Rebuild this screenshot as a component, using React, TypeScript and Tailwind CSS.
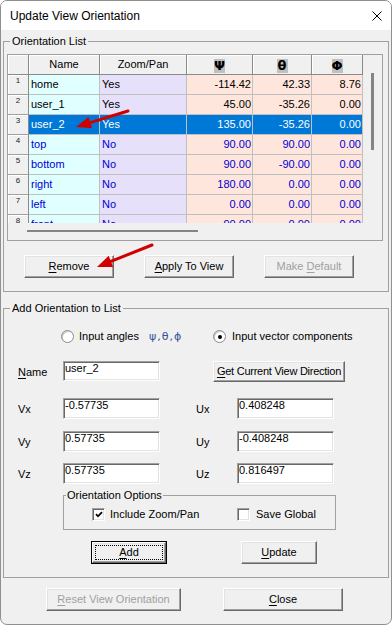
import React from 'react';

type Row = {
  n: number;
  name: string;
  zoom: string;
  psi: string;
  th: string;
  ph: string;
  user?: boolean;
  sel?: boolean;
};

const rows: Row[] = [
  { n: 1, name: 'home', zoom: 'Yes', psi: '-114.42', th: '42.33', ph: '8.76', user: true },
  { n: 2, name: 'user_1', zoom: 'Yes', psi: '45.00', th: '-35.26', ph: '0.00', user: true },
  { n: 3, name: 'user_2', zoom: 'Yes', psi: '135.00', th: '-35.26', ph: '0.00', user: true, sel: true },
  { n: 4, name: 'top', zoom: 'No', psi: '90.00', th: '90.00', ph: '0.00' },
  { n: 5, name: 'bottom', zoom: 'No', psi: '90.00', th: '-90.00', ph: '0.00' },
  { n: 6, name: 'right', zoom: 'No', psi: '180.00', th: '0.00', ph: '0.00' },
  { n: 7, name: 'left', zoom: 'No', psi: '0.00', th: '0.00', ph: '0.00' },
  { n: 8, name: 'front', zoom: 'No', psi: '90.00', th: '0.00', ph: '0.00' },
];

function U({ c }: { c: string }) {
  return <span className="underline underline-offset-[2px] decoration-1">{c}</span>;
}

const raised =
  'flex items-center justify-center whitespace-nowrap bg-[#f0f0f0] border border-t-white border-l-white border-r-[#696969] border-b-[#696969] shadow-[inset_-1px_-1px_0_#a0a0a0,inset_1px_1px_0_#e3e3e3]';

function Btn({
  className,
  children,
  disabled,
  def,
}: {
  className: string;
  children: React.ReactNode;
  disabled?: boolean;
  def?: boolean;
}) {
  if (def) {
    return (
      <div className={`${className} border border-black flex`}>
        <div className={`flex-1 ${raised} p-[2px]`}>
          <div className="w-full h-full border border-dotted border-black flex items-center justify-center">
            {children}
          </div>
        </div>
      </div>
    );
  }
  return (
    <div className={`${className} ${raised} ${disabled ? 'text-[#a0a0a0]' : 'text-black'}`}>{children}</div>
  );
}

function Input({ className, value }: { className: string; value: string }) {
  return (
    <div
      className={`${className} bg-white border border-t-[#a0a0a0] border-l-[#a0a0a0] border-r-white border-b-white shadow-[inset_1px_1px_0_#696969,inset_-1px_-1px_0_#e3e3e3] pl-[1px] flex items-start`}
    >
      {value}
    </div>
  );
}

function Radio({ checked }: { checked?: boolean }) {
  return (
    <span className="w-[13px] h-[13px] shrink-0 rounded-full bg-white border border-[#8a8a8a] shadow-[inset_1px_1px_0_#c8c8c8] flex items-center justify-center">
      {checked && <span className="w-[4px] h-[4px] rounded-full bg-black" />}
    </span>
  );
}

function Check({ checked }: { checked?: boolean }) {
  return (
    <span className="w-[13px] h-[13px] shrink-0 bg-white border border-t-[#a0a0a0] border-l-[#a0a0a0] border-r-white border-b-white shadow-[inset_1px_1px_0_#696969,inset_-1px_-1px_0_#e3e3e3] flex items-center justify-center">
      {checked && (
        <svg width="8" height="7" viewBox="0 0 8 7">
          <path d="M1 3.2 L3 5.3 L7 1.2" stroke="#000" strokeWidth="1.8" fill="none" />
        </svg>
      )}
    </span>
  );
}

const hdr =
  'h-full bg-[#f0f0f0] border-r border-b border-r-[#8a8a8a] border-b-[#8a8a8a] shadow-[inset_1px_1px_0_#fff] flex items-center justify-center';

function Greek({ c }: { c: string }) {
  return (
    <span className="inline-flex mt-[3px] w-[11px] h-[14px] bg-[#c0c0c0] items-center justify-center font-bold text-[13px] leading-[14px] font-['DejaVu_Sans',sans-serif]">
      {c}
    </span>
  );
}

function DataRow({ r }: { r: Row }) {
  const tc = r.user ? 'text-black' : 'text-[#0000d8]';
  const c = (bg: string) => (r.sel ? 'bg-[#0078d7] text-white' : `${bg} ${tc}`);
  return (
    <div className="flex h-[20px]">
      <div className="w-[21px] h-full bg-[#f0f0f0] border-r border-b border-r-[#8a8a8a] border-b-[#a0a0a0] shadow-[inset_1px_1px_0_#fff] text-[8px] leading-[8px] text-center pt-[2px] text-[#222]">
        {r.n}
      </div>
      <div className={`w-[71px] h-full border-r border-b border-[#c0c0c0] pl-[2px] flex items-center ${c('bg-[#e0ffff]')}`}>
        {r.name}
      </div>
      <div className={`w-[87px] h-full border-r border-b border-[#c0c0c0] pl-[2px] flex items-center ${c('bg-[#e6e0fa]')}`}>
        {r.zoom}
      </div>
      <div className={`w-[66px] h-full border-r border-b border-[#c0c0c0] pr-[1px] flex items-center justify-end ${c('bg-[#ffe6dc]')}`}>
        {r.psi}
      </div>
      <div className={`w-[59px] h-full border-r border-b border-[#c0c0c0] pr-[1px] flex items-center justify-end ${c('bg-[#ffe6dc]')}`}>
        {r.th}
      </div>
      <div className={`w-[51px] h-full border-r border-b border-[#c0c0c0] pr-[1px] flex items-center justify-end ${c('bg-[#ffe6dc]')}`}>
        {r.ph}
      </div>
    </div>
  );
}

function Table() {
  return (
    <div className="w-[376px] h-[187px] mt-[6px] border border-[#a0a0a0] bg-[#f0f0f0] flex flex-col">
      <div className="flex h-[168px]">
        <div className="w-[355px] h-[168px] overflow-hidden">
          <div className="flex h-[20px]">
            <div className={`w-[21px] ${hdr}`} />
            <div className={`w-[71px] ${hdr}`}>Name</div>
            <div className={`w-[87px] ${hdr}`}>Zoom/Pan</div>
            <div className={`w-[66px] ${hdr}`}>
              <Greek c="Ψ" />
            </div>
            <div className={`w-[59px] ${hdr}`}>
              <Greek c="θ" />
            </div>
            <div className={`w-[51px] ${hdr}`}>
              <Greek c="Φ" />
            </div>
          </div>
          {rows.map((r) => (
            <DataRow key={r.n} r={r} />
          ))}
        </div>
        <div className="w-[19px] h-[168px] pl-[8px] pt-[18px]">
          <div className="w-[3px] h-[77px] bg-[#858585]" />
        </div>
      </div>
      <div className="h-[17px] pl-[19px] pt-[7px]">
        <div className="w-[171px] h-[2px] bg-[#858585]" />
      </div>
    </div>
  );
}

export default function App() {
  return (
    <div className="relative w-[392px] h-[625px] bg-[#f0f0f0] border border-[#8f8f8f] rounded-[7px] overflow-hidden font-['Liberation_Sans',Arial,sans-serif] text-[11px] leading-[13px] text-black">
      {/* title bar */}
      <div className="h-[29px] bg-white flex items-center justify-between pl-[9px] pr-[9px] pt-[1px]">
        <span className="text-[12px] leading-[15px]">Update View Orientation</span>
        <svg width="10" height="10" viewBox="0 0 10 10">
          <path d="M0.5 0.5 L9.5 9.5 M9.5 0.5 L0.5 9.5" stroke="#000" strokeWidth="1" />
        </svg>
      </div>

      {/* Orientation List */}
      <fieldset className="mx-[2px] mt-[5px] border border-[#a0a0a0]">
        <legend className="ml-[6px] px-[2px] leading-[13px]">Orientation List</legend>
        <div className="pl-[3px] pb-[13px]">
          <Table />
          <div className="flex mt-[14px] ml-[17px]">
            <Btn className="w-[90px] h-[23px]">
              <U c="R" />
              emove
            </Btn>
            <Btn className="ml-[30px] w-[90px] h-[23px]">
              <U c="A" />
              pply To View
            </Btn>
            <Btn disabled className="ml-[30px] w-[90px] h-[23px]">
              Make&nbsp;<U c="D" />
              efault
            </Btn>
          </div>
        </div>
      </fieldset>

      {/* Add Orientation to List */}
      <fieldset className="mx-[2px] mt-[10px] border border-[#a0a0a0]">
        <legend className="ml-[6px] px-[2px] leading-[13px]">Add Orientation to List</legend>
        <div className="pb-[13px]">
          <div className="flex items-center h-[13px] mt-[15px] ml-[57px]">
            <div className="w-[152px] flex items-center gap-[5px]">
              <Radio />
              <span className="w-[65px]">Input angles</span>
              <span className="text-[#34509c] tracking-[1px] font-['DejaVu_Sans',sans-serif] text-[11px]">ψ,θ,ϕ</span>
            </div>
            <div className="flex items-center gap-[6px]">
              <Radio checked />
              <span>Input vector components</span>
            </div>
          </div>

          <div className="flex items-start h-[21px] mt-[18px]">
            <span className="ml-[14px] w-[45px] mt-[5px]">
              <U c="N" />
              ame
            </span>
            <Input className="w-[97px] h-[20px]" value="user_2" />
            <Btn className="ml-[53px] w-[132px] h-[21px] tracking-[-0.25px]">
              <U c="G" />
              et Current View Direction
            </Btn>
          </div>

          <div className="flex items-start h-[21px] mt-[16px]">
            <span className="ml-[14px] w-[45px] mt-[5px]">Vx</span>
            <Input className="w-[97px] h-[21px]" value="-0.57735" />
            <span className="ml-[36px] w-[41px] mt-[5px]">Ux</span>
            <Input className="w-[97px] h-[21px]" value="0.408248" />
          </div>
          <div className="flex items-start h-[21px] mt-[12px]">
            <span className="ml-[14px] w-[45px] mt-[5px]">Vy</span>
            <Input className="w-[97px] h-[21px]" value="0.57735" />
            <span className="ml-[36px] w-[41px] mt-[5px]">Uy</span>
            <Input className="w-[97px] h-[21px]" value="-0.408248" />
          </div>
          <div className="flex items-start h-[21px] mt-[11px]">
            <span className="ml-[14px] w-[45px] mt-[5px]">Vz</span>
            <Input className="w-[97px] h-[21px]" value="0.57735" />
            <span className="ml-[36px] w-[41px] mt-[5px]">Uz</span>
            <Input className="w-[97px] h-[21px]" value="0.816497" />
          </div>

          <fieldset className="ml-[59px] w-[273px] mt-[5px] border border-[#a0a0a0]">
            <legend className="ml-[2px] px-[1px] leading-[13px]">Orientation Options</legend>
            <div className="pb-[8px]">
              <div className="flex items-center h-[13px] mt-[6px]">
                <div className="w-[145px] ml-[28px] flex items-center gap-[5px]">
                  <Check checked />
                  <span>Include Zoom/Pan</span>
                </div>
                <div className="flex items-center gap-[6px]">
                  <Check />
                  <span>Save Global</span>
                </div>
              </div>
            </div>
          </fieldset>

          <div className="flex mt-[11px] ml-[87px]">
            <Btn def className="w-[76px] h-[23px]">
              <U c="A" />
              dd
            </Btn>
            <Btn className="ml-[74px] w-[76px] h-[23px]">
              <U c="U" />
              pdate
            </Btn>
          </div>
        </div>
      </fieldset>

      <div className="flex mt-[10px] ml-[45px]">
        <Btn disabled className="w-[135px] h-[23px]">
          <U c="R" />
          eset View Orientation
        </Btn>
        <Btn className="ml-[42px] w-[120px] h-[23px]">
          <U c="C" />
          lose
        </Btn>
      </div>

      {/* red annotation arrows */}
      <svg className="absolute left-[-1px] top-[-1px] pointer-events-none" width="392" height="625" viewBox="0 0 392 625">
        <line x1="128" y1="111" x2="90.3" y2="122.6" stroke="#d10000" strokeWidth="3" strokeLinecap="round" />
        <polygon points="76,127 92.1,128.3 88.5,116.9" fill="#d10000" />
        <line x1="152" y1="245" x2="110.9" y2="261.4" stroke="#d10000" strokeWidth="3" strokeLinecap="round" />
        <polygon points="97,267 113.1,267 108.7,255.8" fill="#d10000" />
      </svg>
    </div>
  );
}
